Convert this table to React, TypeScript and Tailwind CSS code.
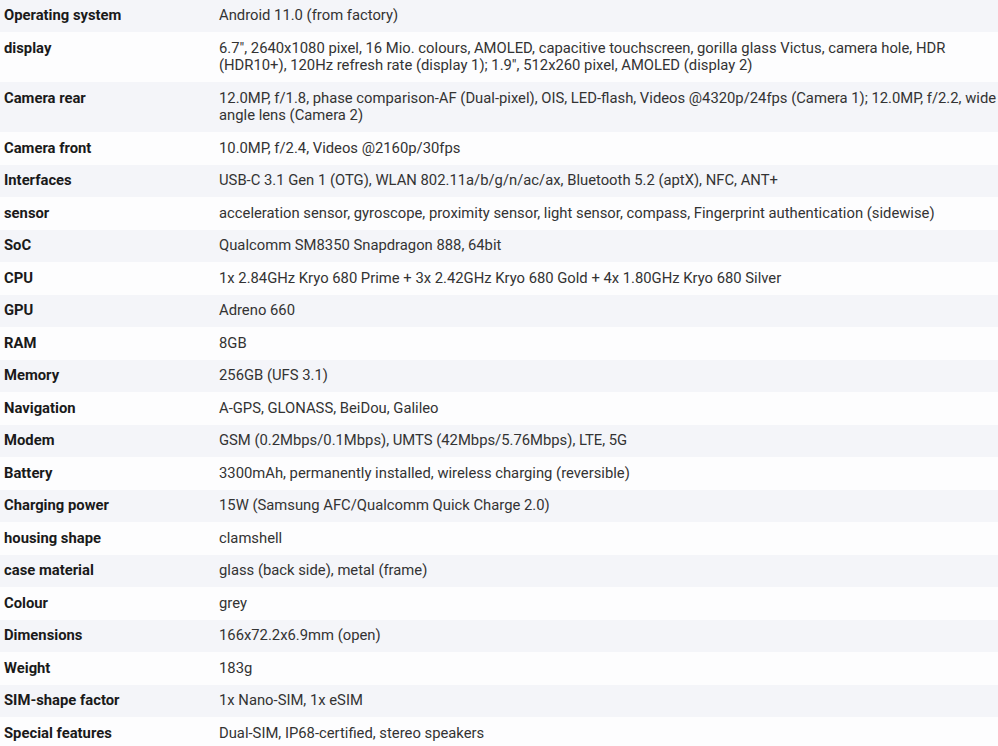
import React from "react";

const rows: [string, string][] = [
  ["Operating system", "Android 11.0 (from factory)"],
  ["display", "6.7\", 2640x1080 pixel, 16 Mio. colours, AMOLED, capacitive touchscreen, gorilla glass Victus, camera hole, HDR (HDR10+), 120Hz refresh rate (display 1); 1.9\", 512x260 pixel, AMOLED (display 2)"],
  ["Camera rear", "12.0MP, f/1.8, phase comparison-AF (Dual-pixel), OIS, LED-flash, Videos @4320p/24fps (Camera 1); 12.0MP, f/2.2, wide angle lens (Camera 2)"],
  ["Camera front", "10.0MP, f/2.4, Videos @2160p/30fps"],
  ["Interfaces", "USB-C 3.1 Gen 1 (OTG), WLAN 802.11a/b/g/n/ac/ax, Bluetooth 5.2 (aptX), NFC, ANT+"],
  ["sensor", "acceleration sensor, gyroscope, proximity sensor, light sensor, compass, Fingerprint authentication (sidewise)"],
  ["SoC", "Qualcomm SM8350 Snapdragon 888, 64bit"],
  ["CPU", "1x 2.84GHz Kryo 680 Prime + 3x 2.42GHz Kryo 680 Gold + 4x 1.80GHz Kryo 680 Silver"],
  ["GPU", "Adreno 660"],
  ["RAM", "8GB"],
  ["Memory", "256GB (UFS 3.1)"],
  ["Navigation", "A-GPS, GLONASS, BeiDou, Galileo"],
  ["Modem", "GSM (0.2Mbps/0.1Mbps), UMTS (42Mbps/5.76Mbps), LTE, 5G"],
  ["Battery", "3300mAh, permanently installed, wireless charging (reversible)"],
  ["Charging power", "15W (Samsung AFC/Qualcomm Quick Charge 2.0)"],
  ["housing shape", "clamshell"],
  ["case material", "glass (back side), metal (frame)"],
  ["Colour", "grey"],
  ["Dimensions", "166x72.2x6.9mm (open)"],
  ["Weight", "183g"],
  ["SIM-shape factor", "1x Nano-SIM, 1x eSIM"],
  ["Special features", "Dual-SIM, IP68-certified, stereo speakers"],
];

export default function App() {
  return (
    <div className="w-[998px] h-[746px] overflow-hidden bg-[#fdfdfe]">
      <div className="-mt-[0.4px] flex flex-col font-['Roboto',sans-serif] text-[14.8px] leading-[17.5px]">
        {rows.map(([k, v], i) => (
          <div
            key={k}
            className={`flex ${i % 2 === 0 ? "bg-[#f4f5f9]" : "bg-[#fdfdfe]"}`}
          >
            <div className="w-[214px] shrink-0 pl-[4px] pr-[4px] py-[7.5px] font-bold text-[#1a1a1a]">
              {k}
            </div>
            <div className="flex-1 pl-[5px] pr-0 py-[7.5px] text-[#333333]">{v}</div>
          </div>
        ))}
      </div>
    </div>
  );
}
